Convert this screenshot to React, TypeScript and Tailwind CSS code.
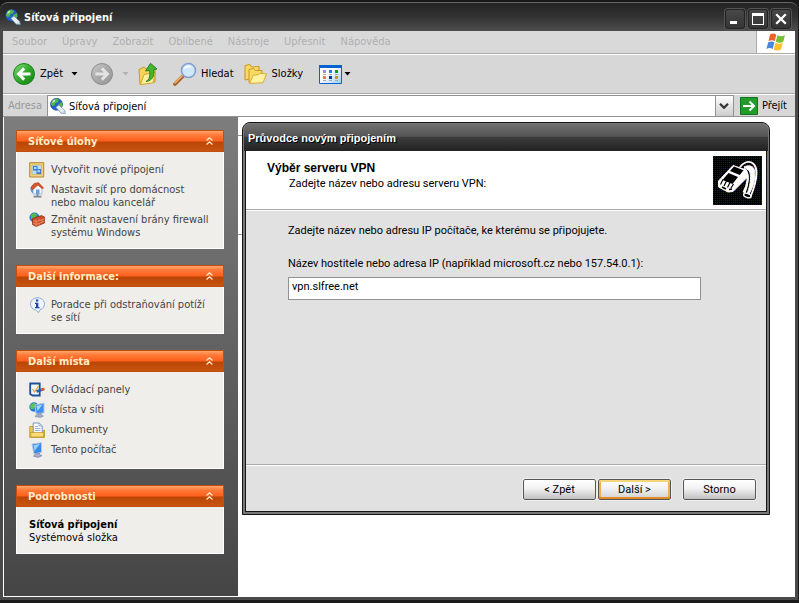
import React from "react";

type Kids = { children?: React.ReactNode };

function Globe({ className = "size-4" }: { className?: string }) {
  return (
    <svg className={className} viewBox="0 0 16 16" aria-hidden="true">
      <circle cx="6.5" cy="6.3" r="6" fill="#1f62c8" stroke="#17408c" strokeWidth=".6" />
      <path d="M3 1.800 6.500.5 9 2 7.800 4.400 5.500 5l-.8 2.400L2.500 8 .7 6zM8.500 6 12 4l.5 3.400-2.200 3-2-1.600z" fill="#55b548" />
      <path d="M2.600 3 5.200 1.400 5 3.300 2.400 5z" fill="#d7f3c4" />
      <path d="M5.800 9.200 8.800 7l5.800 5.300.8 3.200-4.400-.3z" fill="#d9e4f0" stroke="#6d87a8" strokeWidth=".7" />
      <path d="m7.500 9.300 4.600 4.200M9 8.300l4.200 3.800" stroke="#fff" strokeWidth=".9" />
    </svg>
  );
}

function BackIcon({ enabled = true }: { enabled?: boolean }) {
  return (
    <svg className="size-6" viewBox="0 0 24 24" aria-hidden="true">
      <defs>
        <linearGradient id={enabled ? "navOn" : "navOff"} x1="0" y1="0" x2="1" y2="1">
          <stop offset="0" stopColor={enabled ? "#8ade7c" : "#cacaca"} />
          <stop offset=".5" stopColor={enabled ? "#2fa82c" : "#a9a9a9"} />
          <stop offset="1" stopColor={enabled ? "#128212" : "#989898"} />
        </linearGradient>
      </defs>
      <circle cx="12" cy="12" r="10.5" fill={enabled ? "url(#navOn)" : "url(#navOff)"} stroke={enabled ? "#168518" : "#8e8e8e"} />
      <path
        d={enabled ? "M18.500 12H7m5.200-5.600L6.600 12l5.600 5.600" : "M5.500 12H17m-5.200-5.600 5.600 5.600-5.600 5.600"}
        fill="none"
        stroke={enabled ? "#fff" : "#e3e3e3"}
        strokeWidth="3"
      />
    </svg>
  );
}

function UpFolderIcon() {
  return (
    <svg className="size-6" viewBox="0 0 24 24" aria-hidden="true">
      <path d="M2 7.500 7 5l2 2 9-.5V20L3 22.500z" fill="#f6d35d" stroke="#c79a20" />
      <path d="M3.500 22.500 7 12.500l11.500-2L16 21z" fill="#fff0a0" stroke="#d2a62d" />
      <path d="M9 19.500c3.500-2 4.300-5.500 3.500-11L8.500 9 13.500 1.300 20 7l-3.200.6C17.800 14 15 19 9 19.500z" fill="#45b431" stroke="#207e1a" strokeWidth=".9" />
    </svg>
  );
}

function SearchIcon() {
  return (
    <svg className="size-6" viewBox="0 0 24 24" aria-hidden="true">
      <path d="m2 22 8.500-8.500" stroke="#a65d1c" strokeWidth="3.600" strokeLinecap="round" />
      <path d="m2 21 8-8" stroke="#f3b071" strokeWidth="1.700" strokeLinecap="round" />
      <circle cx="15.500" cy="8.500" r="7" fill="#cfe8fc" stroke="#809fd0" strokeWidth="1.600" />
      <path d="M10.500 7.500c1.500-4.700 6-5 8.200-2.200-3-.3-5.800.8-8.200 2.200z" fill="#fff" />
    </svg>
  );
}

function FoldersIcon() {
  return (
    <svg className="size-6" viewBox="0 0 24 24" aria-hidden="true">
      <path d="M1 18V3.500l5-1L7.500 5 15 4.500V15z" fill="#f7d968" stroke="#c9981d" />
      <path d="M5 20.500V7.500l4.500-1 1.800 2h6.700v10z" fill="#f7d968" stroke="#c9981d" />
      <path d="m5.500 21.500 3.700-8.300 5-.4 1.600-1.500 6.700.6-3.500 8.800z" fill="#fff2a3" stroke="#d9ad30" />
    </svg>
  );
}

function ViewsIcon() {
  return (
    <svg className="h-[19px] w-[23px]" viewBox="0 0 23 19" aria-hidden="true">
      <defs>
        <linearGradient id="viewsSheet" x1="0" y1="0" x2="1" y2="1">
          <stop offset=".4" stopColor="#fff" />
          <stop offset="1" stopColor="#9ccbfa" />
        </linearGradient>
      </defs>
      <path d="M.5.500h22v18H.500z" fill="url(#viewsSheet)" stroke="#0a62d0" />
      <path d="M0 0h23v3H0z" fill="#0a62d0" />
      <path d="M4 5h3v3H4z" fill="#9b91cf" />
      <path d="M10 5h3v3h-3z" fill="#1684ed" />
      <path d="M16 5h3v3h-3z" fill="#14981f" />
      <path d="M4 11h3v3H4z" fill="#fa784a" />
      <path d="M10 11h3v3h-3z" fill="#0b3d99" />
      <path d="M16 11h3v3h-3z" fill="#c89b15" />
      <path d="M4 9.500h3m3 0h3m3 0h3m-15 6h3m3 0h3m3 0h3" stroke="#aaa" />
    </svg>
  );
}

function WindowsFlag() {
  return (
    <svg className="h-5 w-5" viewBox="0 0 20 20" aria-hidden="true">
      <path d="M4 2.500C6.500 1 8.500 1.500 10.300 2.700L8.700 9.300C6.800 8 4.800 8 2.500 9.200z" fill="#f0602c" />
      <path d="M11.300 3.200c2.500 1.300 4.700 1.400 7.700 0l-1.800 6.600c-2.500 1.300-5 1.300-7.400 0z" fill="#78be30" />
      <path d="M2.200 10.300c2.200-1.200 4.300-1.200 6.200 0L6.700 17C4.800 15.700 2.700 15.700.4 17z" fill="#4a86dc" />
      <path d="M9.400 10.800c2.400 1.300 4.900 1.300 7.400 0L15 17.600c-2.600 1.300-5 1.200-7.300 0z" fill="#fbc22d" />
    </svg>
  );
}

function TaskIcon({ kind }: { kind: string }) {
  return (
    <svg className="mt-px size-4 shrink-0" viewBox="0 0 16 16" aria-hidden="true">
      {kind === "new" && (
        <>
          <path d="M.7.700h14v14.300H.700z" fill="#f1d27b" stroke="#b08a2c" />
          <path d="M3 3h9.500v9.500H3z" fill="#b9dcf9" stroke="#c9a74a" strokeWidth=".6" />
          <path d="M4 4h4.500v4.500H4zM7.500 7h4.500v5H7.500z" fill="#3f7ccc" />
          <path d="M5 5h2.500v2H5zM8.500 8.300h2.500v2H8.500z" fill="#a7dcff" />
        </>
      )}
      {kind === "home" && (
        <>
          <circle cx="6.500" cy="7" r="5" fill="#5393dd" />
          <path d="M4 6.500 8.500 2.500 13 6.500V12H4z" fill="#f7f8fb" stroke="#8da2c1" strokeWidth=".7" />
          <path d="M1.800 6.200 5 1.500 9.500.6l5 5.200-1 1.200-4.500-4-5 4.400z" fill="#d8572b" stroke="#a8391b" strokeWidth=".5" />
          <path d="M7 7.500h3.500V12H7z" fill="#67a0e5" />
          <path d="M8.500 12v2.500M4.500 14.700h8" stroke="#7b8899" strokeWidth="1.800" />
        </>
      )}
      {kind === "wall" && (
        <>
          <circle cx="5.500" cy="5.500" r="5" fill="#2979ce" />
          <path d="m2 3 4-2.500L8 3 5.500 7 2 7z" fill="#52bd4b" />
          <path d="m3.500 6.500 9-3L15.500 5v6L7 14.500l-3.500-2z" fill="#cf4c24" stroke="#842b14" strokeWidth=".7" />
          <path d="m4 8.500 3 1.300 8.500-3M4 11l3 1.400 8.500-3M7 7.500v7M10 6.500v2M13 8v2M10 11v2.500" stroke="#f3a27c" strokeWidth=".7" fill="none" />
        </>
      )}
      {kind === "info" && (
        <>
          <path d="M8 .8a6.800 6.200 0 0 1 3 12L9.500 15.500 6.500 13A6.700 6.200 0 0 1 8 .8z" fill="#eef5ff" stroke="#8cabd0" />
          <path d="M7 2.500h2.300v2H7zM6 5.700h3.300V10h1.200v1.300H6V10h1V7H6z" fill="#1b45ad" />
        </>
      )}
      {kind === "panel" && (
        <>
          <path d="M1.200 1.500h9.500v12H3.700L1.200 12z" fill="#f0f7ff" stroke="#1d4f9d" strokeWidth="1.800" />
          <path d="m3.500 7 2 3 4-6" stroke="#dfaa28" strokeWidth="1.300" fill="none" />
          <path d="M7.500 9.500 15 7" stroke="#275da8" strokeWidth="2.800" />
          <path d="m12 8 3.500-1.200" stroke="#db5d2e" strokeWidth="2.200" />
        </>
      )}
      {kind === "network" && (
        <>
          <circle cx="5" cy="5" r="4.700" fill="#2b7ccf" />
          <path d="M.800 3.500 5 .6l2 2L5 7 2 7z" fill="#5cc456" />
          <path d="m6 3 9-2v10l-8 .500z" fill="#3d8ff0" stroke="#b7c5df" />
          <path d="m7.500 4 6-1.500L8.500 9z" fill="#a6d8ff" />
          <path d="m8.500 11.800 3.500-.4.500 1.800 2 .8-3 1.500-5.500-1z" fill="#9eaacb" stroke="#66749b" strokeWidth=".5" />
        </>
      )}
      {kind === "docs" && (
        <>
          <path d="M.7 4.500h4V14h10V8h.8v7.500H.7z" fill="#f3c94c" stroke="#b88b20" strokeWidth=".7" />
          <path d="M4.200 1h6l3 3v8h-9z" fill="#fff" stroke="#7392bd" />
          <path d="M10 1v3h3M6 4.500h3M6 6.500h5.500M6 8.500h5.500" stroke="#7da3d5" strokeWidth=".8" fill="none" />
          <path d="M1.500 10.500h13.500l-.8 4.500H2z" fill="#f9dc78" stroke="#bc9026" strokeWidth=".7" />
        </>
      )}
      {kind === "computer" && (
        <>
          <path d="m3 2 9.500-1.300v9.600L5 12z" fill="#368ae9" stroke="#b7c5df" />
          <path d="m4.500 3 6.500-1-5.500 7z" fill="#95ceff" />
          <path d="m6.500 12 4-.9.500 2 2 .6-4 1.700-4.500-1.200z" fill="#a9b1cb" stroke="#67749c" strokeWidth=".6" />
        </>
      )}
    </svg>
  );
}

function Chevrons() {
  return (
    <svg className="h-2 w-[7px]" viewBox="0 0 7 8" fill="none" stroke="#ffe9cc" strokeWidth="1.300" aria-hidden="true">
      <path d="m.5 3.500 3-2.700 3 2.700M.5 7.500l3-2.700 3 2.700" />
    </svg>
  );
}

function Caret({ dim = false }: { dim?: boolean }) {
  return (
    <svg className="h-1 w-[7px]" viewBox="0 0 7 4" aria-hidden="true">
      <path d="M.5 0h6L3.500 3.500z" fill={dim ? "#b0b0b0" : "#000"} />
    </svg>
  );
}

function Panel({ title, children }: Kids & { title: string }) {
  return (
    <section>
      <h2>
        <button className="flex h-[22px] w-full items-center justify-between border border-[#c24e10] bg-[linear-gradient(#ffa56c_0%,#ff7a38_20%,#ff5f1c_50%,#b94605_55%,#c85410_100%)] pr-2.5 pl-[11px] text-[11px] font-bold text-[#ffedc8]">
          <span className="pt-0.5">{title}</span>
          <Chevrons />
        </button>
      </h2>
      <div className="border border-t-0 border-white bg-[#f0eeea] px-3 pt-[9px] pb-[7px]">{children}</div>
    </section>
  );
}

function Task({ icon, children }: Kids & { icon: string }) {
  return (
    <li className="min-h-5 pb-0.5">
      <a href="#" className="flex gap-1.5 leading-[13px] text-[#444]">
        <TaskIcon kind={icon} />
        <span className="pt-0.5 whitespace-nowrap">{children}</span>
      </a>
    </li>
  );
}

function ModemPicture() {
  return (
    <svg
      className="size-[49px] shrink-0 bg-[#00000c] bg-[conic-gradient(#000_75%,#0000f0_0)] bg-size-[2px_2px]"
      viewBox="0 0 49 49"
      role="img"
      aria-label="VPN"
    >
      <path d="M27 11C30 6.500 36 4 40 7.500c5 4 4.500 16-2.500 33.500l-6.500-2.500C36 26 36.500 18 31 12.500" fill="none" stroke="#fff" strokeWidth="1.800" />
      <path d="M31 11c4-2 8.500-1.500 10 2 2 6 .5 16-5 25l-1.500-1C38 27 38.500 18 36 14.500z" fill="#fff" stroke="#fff" />
      <path d="M33 14.500c3 5 2.500 12-2.500 22" fill="none" stroke="#fff" strokeWidth="2" />
      <ellipse cx="34.300" cy="39.500" rx="3.800" ry="2" transform="rotate(20 34.300 39.500)" fill="#000" stroke="#fff" strokeWidth="1.400" />
      <path d="M5.500 25 20 9.500 33.500 14v8L20 35.500l-5 .5-9.500-5z" fill="#fff" stroke="#fff" strokeLinejoin="round" />
      <path d="m21 10.500 9.500 3.700-3.700 4.800-9.800-4zM15.500 17l9.500 4-5.500 7-10-4z" fill="#000" />
      <path d="m10 23.500-2.500 5m6-3.500-2.500 5m6-3.500-2.500 5m6-3.500-2.500 4" stroke="#000" strokeWidth="1.200" />
      <path d="m9 31 4 2m3 .500 3-.5" stroke="#000" strokeWidth="1.500" />
    </svg>
  );
}

const menus = ["Soubor", "Úpravy", "Zobrazit", "Oblíbené", "Nástroje", "Upřesnit", "Nápověda"];
const captionButton =
  "flex size-5 items-center justify-center rounded-[3px] border border-[#222] bg-[linear-gradient(#484848,#353535)] text-white shadow-[0_0_0_1px_#555]";
const dialogButton =
  "h-[21px] w-[73px] rounded-[2px] border border-[#555] bg-[linear-gradient(#fff,#f1f1f1_45%,#c0c0c0)] text-[11px] leading-[18px] text-black outline-1 outline-[#eee]";

function Wizard() {
  return (
    <form
      aria-label="Průvodce novým připojením"
      onSubmit={(e) => e.preventDefault()}
      className="absolute top-[5px] right-[25px] left-1 flex h-[393px] flex-col rounded-t-lg border border-[#151515] bg-[#777] px-0.5 pb-0.5 font-[Roboto,'Liberation_Sans',sans-serif] text-[11px] text-black"
    >
      <h1 className="-mx-0.5 flex h-7 shrink-0 items-center rounded-t-[7px] border-x border-t border-[#777] bg-[linear-gradient(#707070,#555_45%,#3b3b3b_50%,#222)] px-1 pt-0.5 font-['Liberation_Sans',Arial,sans-serif] font-bold text-white [text-shadow:1px_1px_0_#000]">
        Průvodce novým připojením
      </h1>
      <div className="flex min-h-0 flex-1 flex-col border border-t-0 border-[#151515] bg-[#e1e1e1]">
        <header className="flex h-[59px] shrink-0 justify-between border-b border-[#aaa] bg-white pt-[5px] pr-1 pl-[21px]">
          <div className="pt-1.5">
            <h2 className="font-['Liberation_Sans',Arial,sans-serif] text-[12px] leading-[13px] font-bold">Výběr serveru VPN</h2>
            <p className="pt-0.5 pl-[22px] leading-[13px]">Zadejte název nebo adresu serveru VPN:</p>
          </div>
          <ModemPicture />
        </header>
        <div className="flex-1 border-t border-white px-[42px] pt-[13px] pr-[65px]">
          <p className="leading-[13px]">Zadejte název nebo adresu IP počítače, ke kterému se připojujete.</p>
          <label htmlFor="host" className="mt-5 block leading-[13px]">
            Název hostitele nebo adresa IP (například microsoft.cz nebo 157.54.0.1):
          </label>
          <input
            id="host"
            defaultValue="vpn.slfree.net"
            className="mt-[7px] block h-[23px] w-full border border-[#929292] bg-white px-[3px] pb-1 outline-none"
          />
        </div>
        <footer className="flex h-[47px] shrink-0 justify-end border-t border-[#aaa] pt-3.5 pr-2.5 shadow-[inset_0_1px_0_#fff]">
          <button type="button" className={dialogButton}>&lt; Zpět</button>
          <button
            type="submit"
            className="ml-0.5 h-[21px] w-[73px] rounded-[2px] border border-[#555] bg-[linear-gradient(#fff,#f1f1f1_45%,#d0d0d0)] text-[11px] leading-[18px] shadow-[inset_0_2px_0_#f6d677,inset_0_-2px_0_#e28a25,inset_2px_0_0_#efb04b,inset_-2px_0_0_#efb04b] outline-1 outline-[#eee]"
          >
            Další &gt;
          </button>
          <button type="button" className={dialogButton + " ml-3"}>Storno</button>
        </footer>
      </div>
    </form>
  );
}

export default function App() {
  return (
    <div className="flex h-screen flex-col border-r border-b-[3px] border-[#1a1a1a] bg-[#4a4a4a] px-[3px] pb-[3px] font-['DejaVu_Sans_Condensed','DejaVu_Sans',Tahoma,sans-serif] text-[11px] text-black">
      <header className="-mx-[3px] flex h-[31px] shrink-0 items-center border-t-2 border-[#181818] bg-[#181818]">
        <div className="flex h-full flex-1 items-center rounded-t-lg border-t border-[#666] bg-[linear-gradient(#242424,#303030_45%,#4d4d4d)] pr-[7px] pl-[5px]">
          <Globe />
          <h1 className="flex-1 pt-0.5 pl-[3px] font-bold text-white">Síťová připojení</h1>
          <div className="flex gap-[3px] pt-1">
            <button className={captionButton} aria-label="Minimalizovat">
              <svg className="size-3" viewBox="0 0 12 12"><path d="M1 8h7v3H1z" fill="currentColor" /></svg>
            </button>
            <button className={captionButton} aria-label="Maximalizovat">
              <svg className="size-3" viewBox="0 0 12 12"><path d="M0 0h12v12H0zM1 3v8h10V3z" fill="currentColor" fillRule="evenodd" /></svg>
            </button>
            <button className={captionButton} aria-label="Zavřít">
              <svg className="size-3" viewBox="0 0 12 12"><path d="m1.200 1.200 9.600 9.600m0-9.600-9.600 9.600" stroke="currentColor" strokeWidth="2.300" /></svg>
            </button>
          </div>
        </div>
      </header>

      <nav className="flex h-[23px] shrink-0 justify-between border-b border-[#aaa] bg-[#d9d9d9] text-[#b0b0b0]">
        <div className="flex items-center gap-[15px] pl-[9px]">
          {menus.map((m) => <button key={m}>{m}</button>)}
        </div>
        <div className="flex w-[39px] items-center justify-center border-l border-[#aaa] bg-white"><WindowsFlag /></div>
      </nav>

      <div className="flex h-10 shrink-0 items-center border-t border-b border-t-white border-b-[#aaa] bg-[#d7d7d7] pl-[9px]">
        <button className="flex items-center gap-1"><BackIcon /><span>Zpět</span></button>
        <button className="ml-2" aria-label="Historie"><Caret /></button>
        <button className="ml-3" aria-label="Vpřed" disabled><BackIcon enabled={false} /></button>
        <span className="ml-2 flex"><Caret dim /></span>
        <button className="ml-2" aria-label="Nahoru"><UpFolderIcon /></button>
        <button className="ml-3 flex items-center gap-1"><SearchIcon /><span>Hledat</span></button>
        <button className="ml-2.5 flex items-center gap-1"><FoldersIcon /><span>Složky</span></button>
        <button className="ml-4 flex items-center gap-0.5" aria-label="Zobrazení"><ViewsIcon /><Caret /></button>
      </div>

      <div className="flex h-[23px] shrink-0 items-stretch border-t border-b border-t-white border-b-[#929292] bg-[#d7d7d7]">
        <label htmlFor="address" className="w-11 self-center pt-0.5 pl-[5px] text-[#999]">Adresa</label>
        <div className="flex flex-1 items-center border border-b-0 border-[#929292] bg-white">
          <span className="px-0.5"><Globe /></span>
          <input id="address" defaultValue="Síťová připojení" className="h-full min-w-0 flex-1 bg-white pl-px outline-none" />
          <button aria-label="Rozbalit" className="flex h-full w-[18px] items-center justify-center border-l border-[#929292] bg-[linear-gradient(#fff,#ccc)]">
            <svg className="h-1.5 w-2.5" viewBox="0 0 10 6"><path d="m1 .8 4 4 4-4" fill="none" stroke="#333" strokeWidth="2.200" /></svg>
          </button>
        </div>
        <button className="flex items-center gap-1 pr-2 pl-1.5">
          <svg className="size-[18px]" viewBox="0 0 18 18" aria-hidden="true">
            <path d="M.5.500h17v17H.500z" fill="#249a2b" stroke="#13741b" />
            <path d="M3 9h11M9.500 4.500 14 9l-4.500 4.500" stroke="#fff" strokeWidth="2" fill="none" />
          </svg>
          <span className="pt-0.5">Přejít</span>
        </button>
      </div>

      <main className="flex min-h-0 flex-1 bg-white">
        <aside className="flex w-[235px] shrink-0 flex-col gap-4 border-b border-l border-white bg-[linear-gradient(#7d7d7d,#454545)] pt-[13px] pr-3.5 pl-3">
          <Panel title="Síťové úlohy">
            <ul>
              <Task icon="new">Vytvořit nové připojení</Task>
              <Task icon="home">Nastavit síť pro domácnost<br />nebo malou kancelář</Task>
              <Task icon="wall">Změnit nastavení brány firewall<br />systému Windows</Task>
            </ul>
          </Panel>
          <Panel title="Další informace:">
            <ul>
              <Task icon="info">Poradce při odstraňování potíží<br />se sítí</Task>
            </ul>
          </Panel>
          <Panel title="Další místa">
            <ul>
              <Task icon="panel">Ovládací panely</Task>
              <Task icon="network">Místa v síti</Task>
              <Task icon="docs">Dokumenty</Task>
              <Task icon="computer">Tento počítač</Task>
            </ul>
          </Panel>
          <Panel title="Podrobnosti">
            <div className="py-0.5 leading-[13px]">
              <p className="font-bold">Síťová připojení</p>
              <p>Systémová složka</p>
            </div>
          </Panel>
        </aside>
        <div className="relative min-w-0 flex-1 pt-[18px]">
          <div className="h-[100px] w-1 border-y border-[#929292]" />
          <Wizard />
        </div>
      </main>
    </div>
  );
}
